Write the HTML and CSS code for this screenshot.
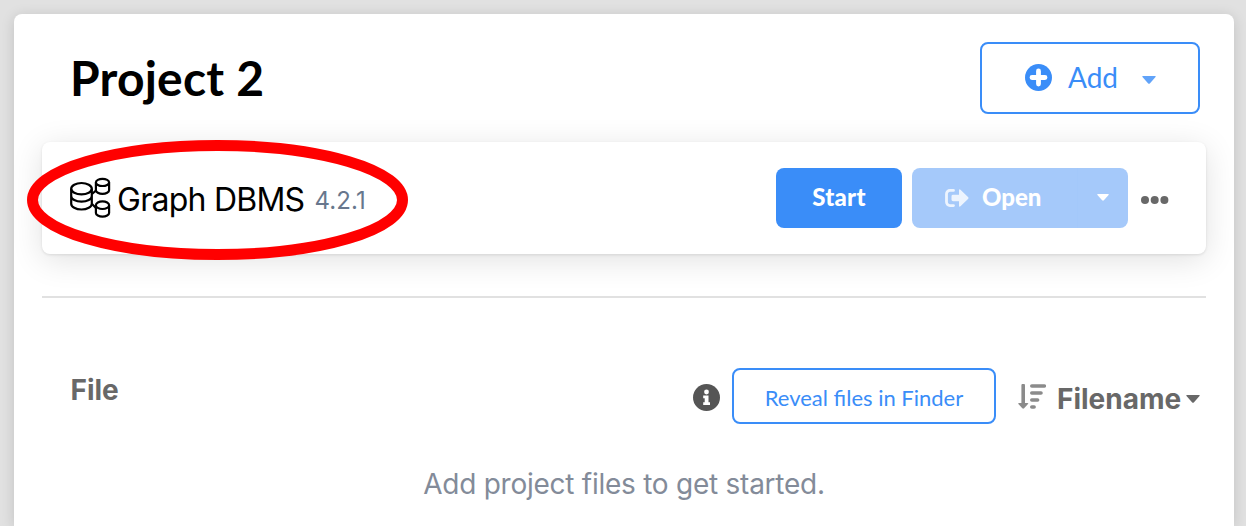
FILE: index.html
```html
<!DOCTYPE html>
<html lang="en">
<head>
<meta charset="utf-8">
<title>Project 2</title>
<link rel="stylesheet" href="styles.css">
</head>
<body>
<main class="panel">
  <header class="panel-header">
    <h1 class="title">Project 2</h1>
    <button class="btn btn-add">
      <svg class="icon-plus" viewBox="0 0 27 27"><circle cx="13.5" cy="13.5" r="13.5" fill="#3a8df8"/><path d="M13.5 7v13M7 13.5h13" stroke="#fff" stroke-width="4.8" stroke-linecap="round"/></svg>
      <span class="add-label">Add</span>
      <svg class="caret caret-add" viewBox="0 0 14 8"><path d="M1 0h12q1.400 0 .5 1.100L8 7.300q-1 1-2 0L.5 1.100Q-.4 0 1 0z"/></svg>
    </button>
  </header>

  <section class="card">
    <svg class="icon-dbms" viewBox="0 0 42 42" fill="none" stroke="#000" stroke-width="2.200">
      <path d="M22 17l4-3.500M22 27l4 4"/>
      <ellipse cx="11.500" cy="11.700" rx="10.300" ry="5.700"/>
      <path d="M1.200 11.700v15c0 3.200 4.600 5.800 10.300 5.800s10.300-2.600 10.300-5.800v-15M1.200 19c0 3.200 4.600 5.700 10.300 5.700S21.800 22.200 21.800 19"/>
      <ellipse cx="32.500" cy="5.400" rx="6.600" ry="3.600"/>
      <path d="M25.900 5.400v7.800c0 2 3 3.700 6.600 3.700s6.600-1.700 6.600-3.700V5.400"/>
      <ellipse cx="32.500" cy="28.200" rx="6.600" ry="3.800"/>
      <path d="M25.900 28.200v7.700c0 2 3 3.700 6.600 3.700s6.600-1.700 6.600-3.700v-7.700"/>
    </svg>
    <span class="db-name">Graph DBMS</span>
    <span class="db-version">4.2.1</span>
    <div class="actions">
      <button class="btn btn-start">Start</button>
      <button class="btn btn-open">
        <span class="open-main">
          <svg class="icon-open" viewBox="0 0 24 18"><path d="M8.500 1.400H5A3.500 3.500 0 0 0 1.500 5v8A3.500 3.500 0 0 0 5 16.600h3.500" fill="none" stroke="#fff" stroke-width="2.800" stroke-linecap="round"/><path d="M8 5.800h6V1.500q0-2 1.500-.8L23 8q1 1 0 2l-7.500 7.300q-1.500 1.200-1.500-.8v-4.300H8q-1.500 0-1.500-1.400V7.200Q6.500 5.800 8 5.800z" fill="#fff"/></svg>
          <span>Open</span>
        </span>
        <span class="open-menu"><svg class="caret caret-open" viewBox="0 0 14 8"><path d="M1 0h12q1.400 0 .5 1.100L8 7.300q-1 1-2 0L.5 1.100Q-.4 0 1 0z"/></svg></span>
      </button>
      <svg class="icon-more" viewBox="0 0 28 8"><circle cx="4" cy="4" r="4"/><circle cx="13.700" cy="4" r="4"/><circle cx="23.400" cy="4" r="4"/></svg>
    </div>
    <svg class="highlight" viewBox="0 0 382 120"><ellipse cx="190.500" cy="60" rx="185" ry="54.500" fill="none" stroke="#f00" stroke-width="11"/></svg>
  </section>

  <hr class="divider">

  <section class="files">
    <h2 class="files-title">File</h2>
    <div class="files-tools">
      <svg class="icon-info" viewBox="0 0 27 27"><circle cx="13.500" cy="13.500" r="13.500" fill="#555"/><circle cx="13.500" cy="8" r="2.400" fill="#fff"/><path d="M10.200 11.500h5.300v6.700h1.500v2.700h-6.800v-2.700h1.500v-4h-1.500z" fill="#fff"/></svg>
      <button class="btn btn-reveal">Reveal files in Finder</button>
      <svg class="icon-sort" viewBox="0 0 28 26"><path d="M5.200 1.500v19" stroke="#8b8b8b" stroke-width="3.600" stroke-linecap="round"/><path d="M1 19h8.500q1.400 0 .5 1.100l-3.900 4.200q-.9.900-1.800 0L.4 20.100Q-.4 19 1 19z" fill="#8b8b8b"/><path d="M13.800 2h12.500M13.800 9h9.200M13.800 16h5.800M13.800 23h2.300" stroke="#8b8b8b" stroke-width="3.600" stroke-linecap="round"/></svg>
      <span class="sort-label">Filename</span>
      <svg class="caret caret-sort" viewBox="0 0 14 8"><path d="M1 0h12q1.400 0 .5 1.100L8 7.300q-1 1-2 0L.5 1.100Q-.4 0 1 0z"/></svg>
    </div>
  </section>
  <p class="empty">Add project files to get started.</p>
</main>
</body>
</html>
```
FILE: styles.css
```css
* { box-sizing: border-box; }
body {
  margin: 0;
  height: 526px;
  padding: 14px 12px 0 14px;
  background: #e1e1e1;
  font-family: Inter, "Liberation Sans", sans-serif;
}
svg { display: block; flex: none; }
.panel {
  height: 512px;
  padding: 28px 28px 0;
  border-radius: 8px 8px 0 0;
  background: #fff;
  box-shadow: 0 2px 14px rgba(0, 0, 0, .14);
}
.btn {
  display: flex;
  align-items: center;
  flex: none;
  padding: 0;
  border: 0;
  border-radius: 8px;
  font-family: Lato, sans-serif;
  white-space: nowrap;
}
.panel-header {
  display: flex;
  justify-content: space-between;
  height: 72px;
  padding: 0 6px 0 28px;
}
.title {
  margin: 0;
  font: 700 48px/72px Lato, sans-serif;
  letter-spacing: .2px;
  color: #000;
}
.btn-add {
  width: 220px;
  height: 72px;
  padding: 0 0 2px 43px;
  border: 2px solid #3a8df8;
  background: #fff;
  color: #3a8df8;
  font-size: 28px;
}
.icon-plus { width: 27px; height: 27px; margin-top: 1px; }
.add-label { width: 50px; margin-left: 16px; }
.caret-add { width: 14px; height: 8px; margin: 5px 0 0 24px; fill: #3a8df8; opacity: .8; }

.card {
  position: relative;
  display: flex;
  align-items: center;
  height: 112px;
  margin-top: 28px;
  padding: 0 37px 0 28px;
  border-radius: 8px;
  background: #fff;
  box-shadow: 0 1px 3px rgba(0, 0, 0, .1), 0 6px 32px rgba(0, 0, 0, .12);
}
.icon-dbms { width: 42px; height: 42px; margin-bottom: 1px; }
.db-name { margin: 2px 0 0 5px; font-size: 32px; letter-spacing: -.75px; color: #000; white-space: nowrap; }
.db-version { margin: 4px 0 0 10px; font-size: 24px; letter-spacing: .15px; color: #68778d; }
.actions { display: flex; align-items: center; margin-left: auto; }
.btn-start, .btn-open { height: 60px; color: #fff; font-size: 24px; font-weight: 900; }
.btn-start { justify-content: center; width: 126px; padding-bottom: 3px; letter-spacing: .25px; background: #3a8df8; }
.btn-open { width: 216px; margin-left: 10px; background: #a5c9fa; }
.open-main { display: flex; align-items: center; width: 165px; height: 60px; padding: 0 0 3px 33px; }
.icon-open { width: 24px; height: 18px; margin: 2px 13px 0 0; opacity: .8; }
.open-menu { display: flex; align-items: center; width: 51px; height: 60px; padding: 0 0 2px 19px; border-left: 1px solid #a3c8fa; }
.caret-open { width: 12px; height: 7px; fill: #fff; }
.icon-more { width: 28px; height: 8px; margin: 3px 0 0 13px; fill: #686868; }
.highlight { position: absolute; left: -15px; top: -2px; width: 382px; height: 120px; }

.divider { height: 2px; margin: 42px 0 0; border: 0; background: #e1e1e1; }
.files {
  display: flex;
  justify-content: space-between;
  height: 56px;
  margin-top: 70px;
  padding: 0 5px 0 28.5px;
  color: #686868;
}
.files-title { margin: 0; font-size: 28px; line-height: 45px; }
.files-tools { display: flex; align-items: center; }
.icon-info { width: 27px; height: 27px; margin: 2px 12px 0 0; }
.btn-reveal {
  justify-content: center;
  width: 264px;
  height: 56px;
  padding-top: 3px;
  border: 2px solid #3a8df8;
  background: #fff;
  color: #3a8df8;
  font-size: 22px;
}
.icon-sort { width: 28px; height: 26px; margin: 2px 11px 0 22px; }
.sort-label { width: 124px; margin-top: 5px; font-size: 28px; font-weight: 700; }
.caret-sort { width: 14px; height: 8px; margin: 6px 1px 0 5px; fill: #686868; }
.empty { margin: 42px 0 0; font-size: 28px; line-height: 36px; letter-spacing: -.25px; color: #838b99; text-align: center; }
```
